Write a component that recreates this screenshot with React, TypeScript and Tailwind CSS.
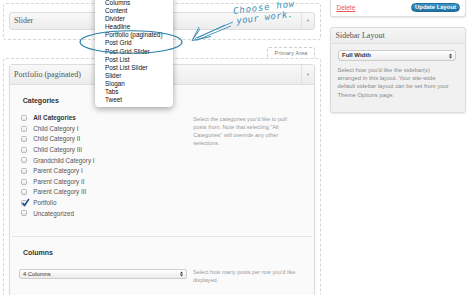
import React from 'react'

const blocks = [
  'Columns',
  'Content',
  'Divider',
  'Headline',
  'Portfolio (paginated)',
  'Post Grid',
  'Post Grid Slider',
  'Post List',
  'Post List Slider',
  'Slider',
  'Slogan',
  'Tabs',
  'Tweet',
]

const categories: { name: string; bold?: boolean; checked?: boolean }[] = [
  { name: 'All Categories', bold: true },
  { name: 'Child Category I' },
  { name: 'Child Category II' },
  { name: 'Child Category III' },
  { name: 'Grandchild Category I' },
  { name: 'Parent Category I' },
  { name: 'Parent Category II' },
  { name: 'Parent Category III' },
  { name: 'Portfolio', checked: true },
  { name: 'Uncategorized' },
]

function Checkbox({ checked }: { checked?: boolean }) {
  return (
    <span className="relative inline-block w-[6px] h-[6px] shrink-0 rounded-[1.5px] border border-[#b8b8b8] bg-linear-to-b from-white to-[#e4e4e4]">
      {checked && (
        <svg className="absolute left-[-1px] top-[-3px]" width="9" height="9" viewBox="0 0 9 9">
          <path d="M1.6 4.8 L3.4 7.4 L8 1" fill="none" stroke="#1f4f8e" strokeWidth="1.5" />
        </svg>
      )}
    </span>
  )
}

function SelectArrows() {
  return (
    <svg width="3" height="6" viewBox="0 0 3 6">
      <path d="M0 2.4 L1.5 0.6 L3 2.4Z M0 3.6 L1.5 5.4 L3 3.6Z" fill="#333" />
    </svg>
  )
}

function HeaderBar({ title, className }: { title: string; className: string }) {
  return (
    <div className={`flex items-stretch bg-linear-to-b from-[#f9f9f9] to-[#ececec] ${className}`}>
      <div className="flex-1 flex items-center pl-[4px] font-['Liberation_Serif'] text-[8px] text-[#555]">
        {title}
      </div>
      <div className="w-[13px] border-l border-[#e2e2e2] flex items-center justify-center text-[4px] text-[#9a9a9a]">
        ▼
      </div>
    </div>
  )
}

export default function App() {
  return (
    <div className="relative w-[472px] h-[295px] overflow-hidden bg-white flex items-start font-['Liberation_Sans',sans-serif]">
      {/* left: primary area */}
      <div className="ml-[3px] w-[318px] flex flex-col">
        <div className="mt-[3px] border border-dashed border-[#d6d6d6] rounded-[3px] px-[5px] pt-[8px] pb-[9px]">
          <HeaderBar title="Slider" className="h-[18px] border border-[#dcdcdc] rounded-[3px]" />
        </div>

        <div className="flex justify-end mt-[7px] mr-[6px]">
          <div className="h-[11px] w-[48px] border border-b-0 border-dashed border-[#d0d0d0] rounded-t-[2px] flex items-center justify-center text-[5.4px] tracking-[0.15px] text-[#777]">
            Primary Area
          </div>
        </div>

        <div className="border border-b-0 border-dashed border-[#d6d6d6] rounded-t-[3px] px-[5px] pt-[5px] h-[240px]">
          <div className="border border-[#dcdcdc] rounded-t-[3px] shadow-[0_1px_2px_rgba(0,0,0,0.08)] h-[240px] bg-[#fafafa]">
            <HeaderBar title="Portfolio (paginated)" className="h-[20px] border-b border-[#dedede]" />

            <div className="pl-[10.5px] pt-[10.5px]">
              <div className="ml-[2.2px] text-[7px] leading-[9px] font-bold text-[#333]">Categories</div>
              <div className="flex items-start mt-[8.2px]">
                <div className="w-[172.8px] flex flex-col">
                  {categories.map((c) => (
                    <div key={c.name} className="h-[10.6px] flex items-center gap-[6.8px]">
                      <Checkbox checked={c.checked} />
                      <span className={`text-[6.3px] ${c.bold ? 'font-bold text-[#333]' : 'text-[#555]'}`}>{c.name}</span>
                    </div>
                  ))}
                </div>
                <div className="mt-[2.3px] text-[5.6px] leading-[8px] text-[#9a9a9a] whitespace-nowrap">
                  <div>Select the categories you'd like to pull</div>
                  <div>posts from. Note that selecting &quot;All</div>
                  <div>Categories&quot; will override any other</div>
                  <div>selections.</div>
                </div>
              </div>
            </div>

            <div className="mt-[17.3px] mx-[2px] border-t border-[#e6e6e6]" />

            <div className="pt-[11.5px]">
              <div className="pl-[13px] text-[7px] leading-[9px] font-bold text-[#333]">Columns</div>
              <div className="flex items-start mt-[11.5px] pl-[9px]">
                <div className="w-[168px] h-[10px] rounded-[2px] border border-[#cfcfcf] bg-linear-to-b from-white to-[#ebebeb] flex items-center justify-between pl-[3px] pr-[3px]">
                  <span className="text-[5.8px] text-[#333]">4 Columns</span>
                  <SelectArrows />
                </div>
                <div className="ml-[6px] mt-[-1px] text-[5.6px] leading-[8px] text-[#9a9a9a] whitespace-nowrap">
                  <div>Select how many posts per row you'd like</div>
                  <div>displayed.</div>
                </div>
              </div>
            </div>
          </div>
        </div>
      </div>

      {/* right: sidebar */}
      <div className="ml-[9px] w-[136px] flex flex-col">
        <div className="h-[17px] bg-white border border-t-0 border-[#dedede] rounded-b-[3px] shadow-[0_1px_2px_rgba(0,0,0,0.1)] flex items-start justify-between pl-[5.5px] pr-[5px] pt-[2.5px]">
          <span className="text-[6.5px] text-[#e4575b] underline decoration-[#e4575b]">Delete</span>
          <span className="h-[9.5px] w-[49px] rounded-full bg-linear-to-b from-[#3c97c9] to-[#21729f] border border-[#1f6b96] flex items-center justify-center text-[5.9px] font-bold text-white">
            Update Layout
          </span>
        </div>

        <div className="mt-[10px] border border-[#dcdcdc] rounded-[3px] shadow-[0_1px_2px_rgba(0,0,0,0.1)] bg-[#f1f1f1]">
          <div className="h-[16px] flex items-center pl-[4.5px] bg-linear-to-b from-[#f7f7f7] to-[#ececec] border-b border-[#e0e0e0] rounded-t-[3px] font-['Liberation_Serif'] text-[8px] text-[#555]">
            Sidebar Layout
          </div>
          <div className="px-[6.5px] pt-[6px] pb-[13px]">
            <div className="ml-[0.5px] w-[118px] h-[11px] rounded-[3px] border border-[#cccccc] bg-linear-to-b from-white to-[#ececec] flex items-center justify-between pl-[3px] pr-[3px]">
              <span className="text-[6px] font-bold text-[#333]">Full Width</span>
              <SelectArrows />
            </div>
            <div className="mt-[5px] text-[5.9px] leading-[8.2px] text-[#8a8a8a] whitespace-nowrap">
              <div>Select how you'd like the sidebar(s)</div>
              <div>arranged in this layout. Your site-wide</div>
              <div>default sidebar layout can be set from your</div>
              <div>Theme Options page.</div>
            </div>
          </div>
        </div>
      </div>

      {/* block type dropdown */}
      <div className="absolute left-[95px] top-[-10px] w-[78px] bg-white rounded-b-[4px] shadow-[0_2px_6px_rgba(0,0,0,0.35)] pt-[8.6px] pb-[2px] pl-[10px]">
        {blocks.map((b) => (
          <div key={b} className="h-[8.17px] leading-[8.17px] text-[6.4px] text-[#111] whitespace-nowrap">
            {b}
          </div>
        ))}
      </div>

      {/* annotation */}
      <svg className="absolute left-0 top-0 pointer-events-none" width="472" height="295" viewBox="0 0 472 295">
        <ellipse cx="131" cy="42" rx="51" ry="11.3" fill="none" stroke="#2a7fa6" strokeWidth="1.1" />
        <path d="M233 22 L195 38.5 M231 26 L196 40.5 M225 25 L197 38" fill="none" stroke="#3a8db6" strokeWidth="0.9" />
        <path d="M192 41 L199 27 M192.5 40.5 L211 36.5 M193 39 L200 29" fill="none" stroke="#3a8db6" strokeWidth="1" />
      </svg>
      <div className="absolute left-[235px] top-[6px] origin-bottom-left rotate-[-7deg] italic font-['DejaVu_Sans_Mono',monospace] text-[9px] leading-[10px] text-[#3a8db6] whitespace-nowrap">
        <div className="tracking-[0.8px]">Choose how</div>
        <div className="ml-[2px] tracking-[0.3px]">your work.</div>
      </div>
    </div>
  )
}
